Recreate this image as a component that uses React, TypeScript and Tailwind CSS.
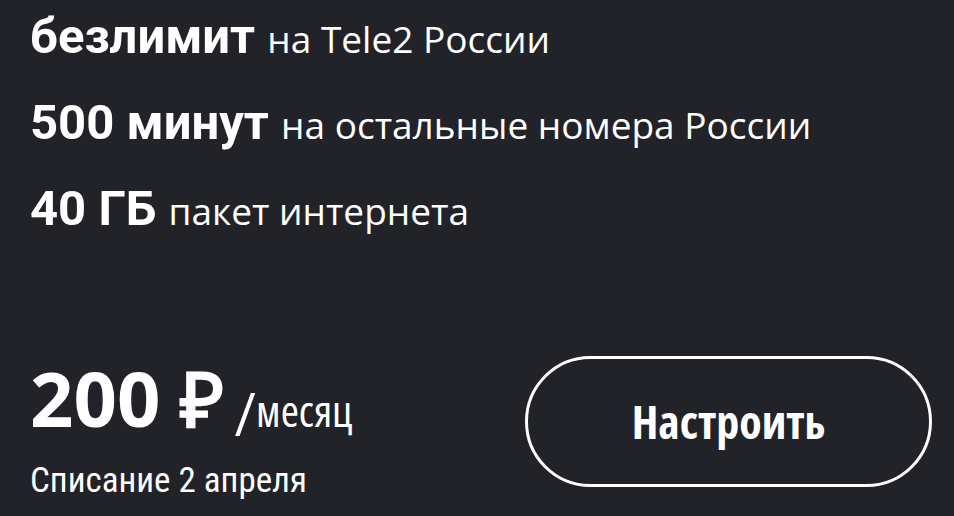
const lines = [
  { bold: 'безлимит', rest: 'на Tele2 России' },
  { bold: '500 минут', rest: 'на остальные номера России' },
  { bold: '40 ГБ', rest: 'пакет интернета' },
];

export default function App() {
  return (
    <div className="h-[516px] w-full overflow-hidden bg-[#212329] text-white font-['Open_Sans',sans-serif]">
      {/* Tariff features */}
      <div className="flex flex-col gap-[12px] pl-[30px]">
        {lines.map((line) => (
          <div
            key={line.bold}
            className="whitespace-nowrap font-['Roboto',sans-serif] text-[49px] leading-[74px] font-bold"
          >
            <span>{line.bold}</span>{' '}
            <span className="font-['Open_Sans',sans-serif] text-[37px] leading-none font-normal">{line.rest}</span>
          </div>
        ))}
      </div>

      {/* Price and action */}
      <div className="mt-[110px] flex items-start justify-between pl-[30px] pr-[22px]">
        <div>
          <div className="whitespace-nowrap text-[76px] leading-[84px] font-bold">
            <span>200 ₽</span>
            <span className="relative top-[9px] ml-[10px] text-[60px] leading-none font-normal font-stretch-condensed">/</span>
            <span className="text-[44px] leading-none font-normal font-stretch-condensed">месяц</span>
          </div>
          <div className="mt-[21px] font-['Roboto_Condensed',sans-serif] text-[35px] leading-[40px]">
            Списание 2 апреля
          </div>
        </div>

        <button className="flex h-[131px] w-[407px] items-center justify-center rounded-full border-[3px] border-white text-[46px] font-bold font-stretch-condensed text-white">
          Настроить
        </button>
      </div>
    </div>
  );
}
